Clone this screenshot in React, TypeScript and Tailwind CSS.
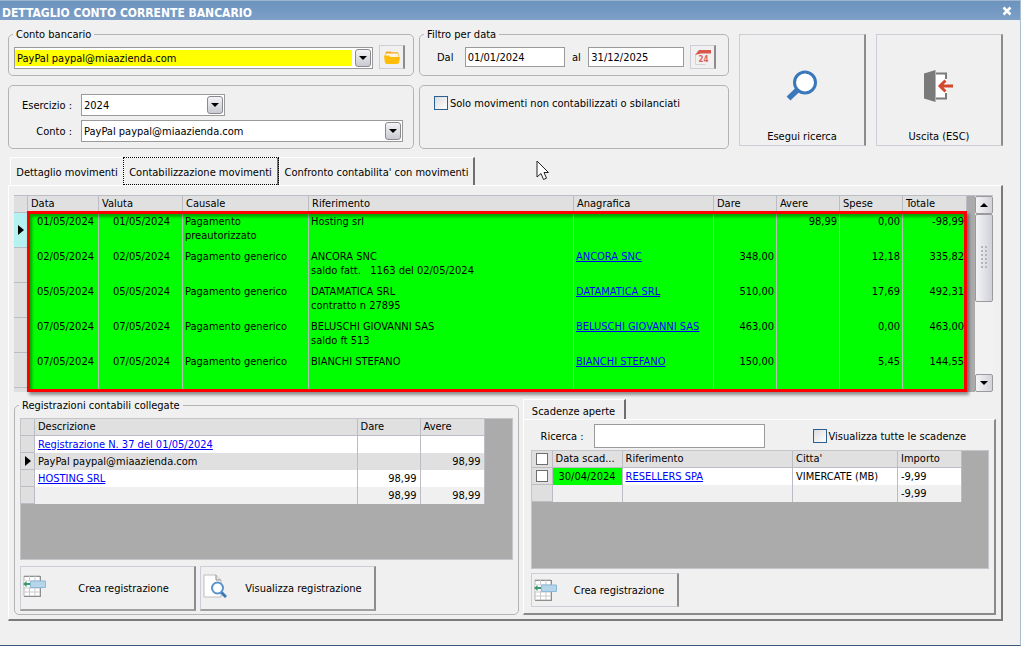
import { useState, type ReactNode } from 'react';
import clsx from 'clsx';

const MOVIMENTI = [
  { data: '01/05/2024', causale: 'Pagamento preautorizzato', rif: 'Hosting srl', anagrafica: '', dare: '', avere: '98,99', spese: '0,00', totale: '-98,99' },
  { data: '02/05/2024', causale: 'Pagamento generico', rif: 'ANCORA SNC\nsaldo fatt.   1163 del 02/05/2024', anagrafica: 'ANCORA SNC', dare: '348,00', avere: '', spese: '12,18', totale: '335,82' },
  { data: '05/05/2024', causale: 'Pagamento generico', rif: 'DATAMATICA SRL\ncontratto n 27895', anagrafica: 'DATAMATICA SRL', dare: '510,00', avere: '', spese: '17,69', totale: '492,31' },
  { data: '07/05/2024', causale: 'Pagamento generico', rif: 'BELUSCHI GIOVANNI SAS\nsaldo ft 513', anagrafica: 'BELUSCHI GIOVANNI SAS', dare: '463,00', avere: '', spese: '0,00', totale: '463,00' },
  { data: '07/05/2024', causale: 'Pagamento generico', rif: 'BIANCHI STEFANO', anagrafica: 'BIANCHI STEFANO', dare: '150,00', avere: '', spese: '5,45', totale: '144,55' },
];

const REGISTRAZIONI = [
  { descr: 'Registrazione N. 37 del 01/05/2024', link: true, dare: '', avere: '', bg: 'bg-white' },
  { descr: 'PayPal paypal@miaazienda.com', link: false, dare: '', avere: '98,99', bg: 'bg-[#e0e0e0]', current: true },
  { descr: 'HOSTING SRL', link: true, dare: '98,99', avere: '', bg: 'bg-white' },
  { descr: '', link: false, dare: '98,99', avere: '98,99', bg: 'bg-[#f0f0f0]' },
];

const TABS = ['Dettaglio movimenti', 'Contabilizzazione movimenti', "Confronto contabilita' con movimenti"];

const th = 'h-[17px] border-r border-b border-[#bcbcc4] bg-[#e0e0e0] px-[3px] py-0 text-left font-normal whitespace-nowrap';
const marker = 'border-r border-b border-[#bcbcc4] bg-[#dfdfdf] p-0';
const link = 'text-[#0000ff] underline';
const raised = 'border border-[#cdced5] border-r-2 border-r-[#8c8c8c] bg-[#f0f0f0]';

function Group({ title, className, children }: { title?: string; className?: string; children: ReactNode }) {
  return (
    <fieldset className="min-w-0 rounded-[5px] border border-[#b4b4b4]">
      {title && <legend className="ml-1 px-[3px] leading-[13px]">{title}</legend>}
      <div className={className}>{children}</div>
    </fieldset>
  );
}

function Combo({ id, value, label, className, highlight }: { id: string; value: string; label?: string; className?: string; highlight?: boolean }) {
  return (
    <div className={clsx('relative h-[22px] border border-[#9a9a9a] bg-white', highlight ? 'py-0.5' : 'py-0', className)}>
      <select
        id={id}
        aria-label={label}
        defaultValue={value}
        className={clsx('block h-full appearance-none pl-0.5 outline-none', highlight ? 'w-[calc(100%-20px)] bg-[#ffff00]' : 'w-full bg-white')}
      >
        <option>{value}</option>
      </select>
      <span className="pointer-events-none absolute top-px right-px flex h-[18px] w-4 items-center justify-center rounded-[3px] border border-[#8a8a8e] bg-linear-to-b from-[#f4f4f6] to-[#c9cad2]">
        <svg width="8" height="4" viewBox="0 0 8 4"><path d="M0 0h8L4 4z" fill="#000" /></svg>
      </span>
    </div>
  );
}

function Check({ id, children }: { id: string; children: ReactNode }) {
  return (
    <div className="flex items-center gap-0.5">
      <input id={id} type="checkbox" className="size-[14px] appearance-none border border-[#2b5f92] bg-linear-to-br from-[#dcdcdc] to-white" />
      <label htmlFor={id} className="whitespace-nowrap">{children}</label>
    </div>
  );
}

function RowArrow() {
  return <svg className="mx-auto" width="6" height="10" viewBox="0 0 6 10"><path d="M0 0l6 5-6 5z" fill="#000" /></svg>;
}

function IconSearch() {
  return (
    <svg width="32" height="32" viewBox="0 0 32 32">
      <path d="M2.500 28.500L12 19.500" stroke="#3a78bb" strokeWidth="5.500" />
      <circle cx="19" cy="12.500" r="10.500" fill="#fff" stroke="#3a78bb" strokeWidth="3" />
    </svg>
  );
}

function IconExit() {
  return (
    <svg width="30" height="32" viewBox="0 0 30 32">
      <path d="M12 3h11v26H12z" fill="#fff" />
      <path d="M12 3.500h10V9M12 28.500h10V23" fill="none" stroke="#7a7a7a" strokeWidth="2" />
      <path d="M0 3.500L11.500 0v32L0 28.500z" fill="#7a7a7a" />
      <path d="M29 16H16M21.500 10.500L16 16l5.500 5.500" fill="none" stroke="#d4492e" strokeWidth="3" />
    </svg>
  );
}

function IconFolder() {
  return (
    <svg width="16" height="13" viewBox="0 0 16 13">
      <path d="M1.500 2Q1.500.500 3 .500h3.500l1 .800H13q1.500 0 1.500 1.500V8h-13z" fill="#f7a823" />
      <path d="M2 3.500Q2 2.500 3 2.500h10q1 0 1 1V6H2z" fill="#fff6e0" />
      <path d="M0 4.500h5L6.500 6H16l-.800 5Q15 13 13 13H3Q1 13 .800 11z" fill="#ffbd0a" />
    </svg>
  );
}

function IconCalendar() {
  return (
    <svg width="18" height="17" viewBox="0 0 18 17">
      <path d="M1.500 5v10.500h10" fill="none" stroke="#d4d4d8" />
      <path d="M5 1h12v3.500H7L1 6z" fill="#d9564a" />
      <text x="9.500" y="13" textAnchor="middle" fontSize="8" fontWeight="bold" fill="#dd6557">24</text>
    </svg>
  );
}

function IconTableInsert() {
  return (
    <svg width="24" height="23" viewBox="0 0 24 23">
      <path d="M1 1h16v20H1z" fill="#fff" stroke="#b5b5b5" />
      <path d="M1 1.500h17M17.500 1v20M1 21.500h17" stroke="#8e8e8e" />
      <path d="M1 6h16M1 13h16M1 17h16M6.500 1v20M12 1v20" stroke="#c9c9c9" />
      <path d="M1 6h7v6H1z" fill="#f5f5f5" />
      <path d="M0 9l3.500-3v2H7v2H3.500v2z" fill="#3d9970" />
      <path d="M7.500 6h15v6.500h-15z" fill="#b5d6ea" stroke="#8cb9d6" />
    </svg>
  );
}

function IconPreview() {
  return (
    <svg width="24" height="24" viewBox="0 0 24 24">
      <path d="M1 1h12l5 5v17H1z" fill="#fff" stroke="#bdbdbd" />
      <path d="M13 1v5h5" fill="#e8e8e8" stroke="#8f8f8f" />
      <path d="M18 18l5 5" stroke="#3a78bb" strokeWidth="3" />
      <circle cx="14.500" cy="14" r="5.500" fill="#fff" stroke="#5a93cc" strokeWidth="2" />
    </svg>
  );
}

function MovimentiGrid() {
  const cell = 'border-r border-[#b4bfb4] bg-[#00ff00] px-0.5 py-0.5';
  const dateCell = 'border-r border-[#b4bfb4] bg-[#00ff00] py-0.5 text-right';
  return (
    <div className="relative mr-[3px] flex h-[197px] border-t border-[#bcbcc4] bg-[#ababab]">
      <div className="min-w-0 flex-1 overflow-hidden">
        <table className="w-full table-fixed border-separate border-spacing-0 leading-[14px]">
          <colgroup>
            <col className="w-[14px]" /><col className="w-[71px]" /><col className="w-[84px]" /><col className="w-[126px]" />
            <col /><col className="w-[140px]" /><col className="w-[63px]" /><col className="w-[63px]" /><col className="w-[63px]" /><col className="w-[64px]" />
          </colgroup>
          <thead>
            <tr>
              <td className={marker} />
              {['Data', 'Valuta', 'Causale', 'Riferimento', 'Anagrafica', 'Dare', 'Avere', 'Spese', 'Totale'].map((h) => <th key={h} className={th}>{h}</th>)}
            </tr>
          </thead>
          <tbody className="align-top">
            {MOVIMENTI.map((m, i) => (
              <tr key={i} className="h-[35px]">
                <td className={clsx('border-r border-b border-[#bcbcc4] p-0 align-middle', i === 0 ? 'bg-[#b4f2f2]' : 'bg-[#dfdfdf]')}>{i === 0 && <RowArrow />}</td>
                <td className={clsx(dateCell, 'pr-1')}>{m.data}</td>
                <td className={clsx(dateCell, 'pr-3')}>{m.data}</td>
                <td className={cell}>{m.causale}</td>
                <td className={clsx(cell, 'whitespace-pre')}>{m.rif}</td>
                <td className={clsx(cell, 'whitespace-nowrap')}>{m.anagrafica && <a href="#" className={link}>{m.anagrafica}</a>}</td>
                <td className={clsx(cell, 'text-right')}>{m.dare}</td>
                <td className={clsx(cell, 'text-right')}>{m.avere}</td>
                <td className={clsx(cell, 'text-right')}>{m.spese}</td>
                <td className={clsx(cell, 'text-right')}>{m.totale}</td>
              </tr>
            ))}
            <tr className="h-2">
              <td className={marker} />
              {[1, 2, 3, 4, 5, 6, 7, 8, 9].map((n) => <td key={n} className="border-r border-[#b4bfb4] bg-[#00ff00]" />)}
            </tr>
          </tbody>
        </table>
      </div>
      <div className="ml-2 flex w-[18px] flex-col bg-[#f2f2f2]">
        <button aria-label="Su" className="flex h-[18px] items-center justify-center rounded-[2px] border border-[#9a9a9e] bg-linear-to-r from-[#f4f4f6] to-[#d2d3da]">
          <svg width="8" height="4" viewBox="0 0 8 4"><path d="M0 4h8L4 0z" fill="#000" /></svg>
        </button>
        <div className="flex h-[88px] items-center justify-center rounded-[2px] border border-[#9a9a9e] bg-linear-to-r from-[#f4f4f6] to-[#d0d1d9]">
          <svg width="7" height="24" viewBox="0 0 7 24">
            <path d="M1 0v24M5 0v24" stroke="#b4b5bc" strokeWidth="2" strokeDasharray="2 2" />
          </svg>
        </div>
        <button aria-label="Giù" className="mt-auto flex h-[18px] items-center justify-center rounded-[2px] border border-[#9a9a9e] bg-linear-to-r from-[#f4f4f6] to-[#d2d3da]">
          <svg width="8" height="4" viewBox="0 0 8 4"><path d="M0 0h8L4 4z" fill="#000" /></svg>
        </button>
      </div>
      <div className="pointer-events-none absolute top-[15px] right-[26px] bottom-0 left-[13px] border-3 border-[#ff0000] shadow-[2px_3px_3px_rgba(0,0,0,0.4),inset_2px_3px_3px_rgba(0,0,0,0.35)]" />
    </div>
  );
}

function RegistrazioniGrid() {
  const cell = 'h-[17px] border-r border-[#bcbcc4] px-[3px] py-0';
  return (
    <div className="h-[142px] border border-[#c4c4ca] bg-[#ababab] pr-[27px]">
      <table className="w-full table-fixed border-separate border-spacing-0 leading-4">
        <colgroup><col className="w-[14px]" /><col /><col className="w-[63px]" /><col className="w-[64px]" /></colgroup>
        <thead>
          <tr><td className={marker} /><th className={th}>Descrizione</th><th className={th}>Dare</th><th className={th}>Avere</th></tr>
        </thead>
        <tbody>
          {REGISTRAZIONI.map((r, i) => (
            <tr key={i} className={r.bg}>
              <td className={r.current ? 'border-r border-b border-[#bcbcc4] p-0' : marker}>{r.current && <RowArrow />}</td>
              <td className={cell}>{r.link ? <a href="#" className={link}>{r.descr}</a> : r.descr}</td>
              <td className={clsx(cell, 'text-right')}>{r.dare}</td>
              <td className={clsx(cell, 'text-right')}>{r.avere}</td>
            </tr>
          ))}
        </tbody>
      </table>
    </div>
  );
}

function ScadenzeGrid() {
  const cell = 'h-[17px] border-r border-[#bcbcc4] px-[3px] py-0';
  const box = 'mx-auto block size-3 appearance-none border border-[#6e6e6e] bg-white';
  return (
    <div className="h-[119px] border border-[#c4c4ca] bg-[#ababab] pr-[26px]">
      <table className="w-full table-fixed border-separate border-spacing-0 leading-4">
        <colgroup><col className="w-[21px]" /><col className="w-[70px]" /><col /><col className="w-[105px]" /><col className="w-[64px]" /></colgroup>
        <thead>
          <tr>
            <td className={marker}><input type="checkbox" aria-label="Seleziona tutte" className={box} /></td>
            {['Data scad...', 'Riferimento', "Citta'", 'Importo'].map((h) => <th key={h} className={th}>{h}</th>)}
          </tr>
        </thead>
        <tbody>
          <tr className="bg-white">
            <td className={marker}><input type="checkbox" aria-label="Seleziona scadenza" className={box} /></td>
            <td className="h-[17px] border-r border-[#bcbcc4] bg-[#00ff00] p-0 text-center">30/04/2024</td>
            <td className={cell}><a href="#" className={link}>RESELLERS SPA</a></td>
            <td className={cell}>VIMERCATE (MB)</td>
            <td className={cell}>-9,99</td>
          </tr>
          <tr className="bg-[#f0f0f0]">
            <td className={marker} />
            <td className={cell} />
            <td className={cell} />
            <td className={cell} />
            <td className={cell}>-9,99</td>
          </tr>
        </tbody>
      </table>
    </div>
  );
}

export default function App() {
  const [tab, setTab] = useState(1);

  return (
    <div className="relative flex min-h-screen flex-col border-r border-b border-r-[#a9bdd3] border-b-[#3f5a80] bg-[#f0f0f0] font-['DejaVu_Sans_Condensed','DejaVu_Sans',sans-serif] text-[11px] leading-[13px] text-black">
      <header className="flex h-5 items-center justify-between border-t border-[#9db5d0] bg-linear-to-b from-[#6b93bd] to-[#7d9fc7] pr-2 pl-0.5 text-white">
        <h1 className="pt-1 text-xs leading-4 font-bold">DETTAGLIO CONTO CORRENTE BANCARIO</h1>
        <button aria-label="Chiudi" className="flex size-[10px] items-center justify-center">
          <svg width="10" height="10" viewBox="0 0 10 10"><path d="M1.500 1.500l7 7M8.500 1.500l-7 7" stroke="#fff" strokeWidth="2.500" /></svg>
        </button>
      </header>

      <main className="pt-2 pr-[17px] pb-[22px] pl-2">
        <div className="grid grid-cols-[721fr_127fr_127fr] gap-2.5">
          <div className="grid min-w-0 grid-cols-[406fr_310fr] gap-x-[5px] gap-y-[9px]">
            <Group title="Conto bancario" className="pt-1 pr-2 pb-1.5 pl-[5px]">
              <div className="flex items-end gap-1.5">
                <Combo id="banca" label="Conto bancario" value="PayPal paypal@miaazienda.com" className="flex-1" highlight />
                <button aria-label="Apri" className={clsx('flex h-6 w-[26px] items-center justify-center', raised)}><IconFolder /></button>
              </div>
            </Group>
            <Group title="Filtro per data" className="pt-1 pr-3 pb-1.5 pl-[17px]">
              <div className="flex items-center">
                <label htmlFor="dal" className="w-7">Dal</label>
                <input id="dal" defaultValue="01/01/2024" className="h-5 w-[100px] border border-[#9a9a9a] bg-white px-0.5 outline-none" />
                <label htmlFor="al" className="w-6 text-center">al</label>
                <input id="al" defaultValue="31/12/2025" className="h-5 w-24 border border-[#9a9a9a] bg-white px-0.5 outline-none" />
                <button aria-label="Calendario" className={clsx('ml-1.5 flex h-6 w-[26px] items-center justify-center', raised)}><IconCalendar /></button>
              </div>
            </Group>
            <Group className="pt-2 pr-2.5 pb-1.5">
              <div className="grid grid-cols-[63px_1fr] items-center gap-x-[9px] gap-y-1">
                <label htmlFor="esercizio" className="text-right">Esercizio :</label>
                <Combo id="esercizio" value="2024" className="w-36" />
                <label htmlFor="conto" className="text-right">Conto :</label>
                <Combo id="conto" value="PayPal paypal@miaazienda.com" />
              </div>
            </Group>
            <Group className="pt-2.5 pl-3.5">
              <Check id="solo">Solo movimenti non contabilizzati o sbilanciati</Check>
            </Group>
          </div>
          <button className={clsx('mt-1.5 flex h-[112px] flex-col items-center justify-end gap-7 pb-0.5', raised)}>
            <IconSearch />
            <span>Esegui ricerca</span>
          </button>
          <button className={clsx('mt-1.5 flex h-[112px] flex-col items-center justify-end gap-7 pb-0.5', raised)}>
            <IconExit />
            <span>Uscita (ESC)</span>
          </button>
        </div>

        <div role="tablist" className="mt-1.5 flex h-[30px] items-end pt-px pl-0.5">
          {TABS.map((t, i) => (
            <button
              key={t}
              role="tab"
              aria-selected={tab === i}
              onClick={() => setTab(i)}
              className={clsx(
                'h-7 whitespace-nowrap border-t border-l border-t-white border-l-white pt-0.5',
                i === 0 && 'w-[113px]',
                i === 1 && 'w-[156px] border-r-2 border-r-[#6f6f6f]',
                i === 2 && 'w-[196px] border-r-2 border-r-[#6f6f6f]',
                tab === i && 'outline-1 outline-dotted -outline-offset-1 outline-black',
              )}
            >
              {t}
            </button>
          ))}
        </div>

        <section className="border border-r-2 border-b-2 border-t-white border-r-[#7a7a7a] border-b-[#7a7a7a] border-l-white pt-[9px] pr-[5px] pb-1 pl-[5px]">
          <MovimentiGrid />
          <div className="mt-[7px] grid grid-cols-[504fr_473fr] gap-1">
            <Group title="Registrazioni contabili collegate" className="pt-1.5 pr-[5px] pb-[3px] pl-[5px]">
              <RegistrazioniGrid />
              <div className="mt-1.5 flex gap-1">
                <button className={clsx('flex h-[45px] w-44 items-center border-b-2 border-b-[#a0a0a0] pb-1 pl-0.5', raised)}>
                  <IconTableInsert />
                  <span className="flex-1 pt-1 pl-1.5">Crea registrazione</span>
                </button>
                <button className={clsx('flex h-[45px] w-44 items-center border-b-2 border-b-[#a0a0a0] pb-1 pl-0.5', raised)}>
                  <IconPreview />
                  <span className="flex-1 pt-1 pl-1.5 whitespace-nowrap">Visualizza registrazione</span>
                </button>
              </div>
            </Group>
            <div className="flex min-w-0 flex-col">
              <div role="tablist" className="flex">
                <button role="tab" aria-selected className="h-5 w-[103px] border-t border-r-2 border-l border-t-white border-r-[#6f6f6f] border-l-white pt-1">Scadenze aperte</button>
              </div>
              <div className="flex-1 border border-r-2 border-b-2 border-t-white border-r-[#8a8a8a] border-b-[#8a8a8a] border-l-white pt-1 pr-[5px] pb-1 pl-[7px]">
                <div className="mb-0.5 flex items-center">
                  <label htmlFor="ricerca" className="w-[63px] pl-2.5">Ricerca :</label>
                  <input id="ricerca" className="h-6 w-[171px] border border-[#9a9a9a] bg-white px-0.5 outline-none" />
                  <div className="mr-auto ml-12"><Check id="tutte">Visualizza tutte le scadenze</Check></div>
                </div>
                <ScadenzeGrid />
                <button className={clsx('mt-1 flex h-[34px] w-[148px] items-center pl-0.5', raised)}>
                  <IconTableInsert />
                  <span className="flex-1 pl-1">Crea registrazione</span>
                </button>
              </div>
            </div>
          </div>
        </section>
      </main>

      <svg className="pointer-events-none absolute top-[160px] left-[536px]" width="14" height="21" viewBox="0 0 14 21">
        <path d="M1 1v16l4-3.500 2.500 6 3-1.300-2.500-5.700H12.500z" fill="#fff" stroke="#222" />
      </svg>
    </div>
  );
}
